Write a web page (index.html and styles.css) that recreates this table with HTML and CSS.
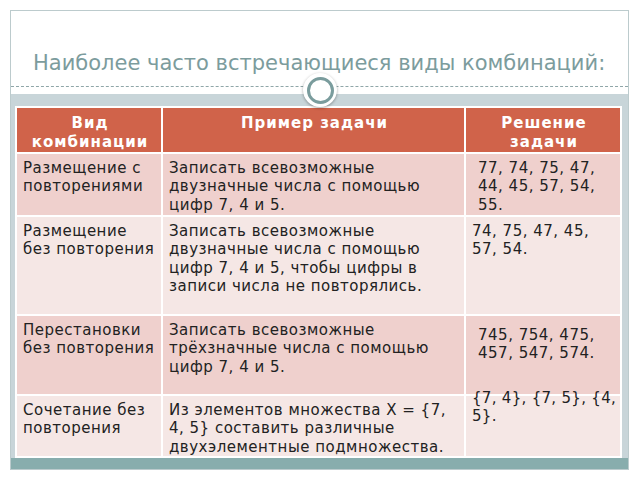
FILE: index.html
```html
<!DOCTYPE html>
<html lang="ru">
<head>
<meta charset="utf-8">
<link rel="stylesheet" href="styles.css">
</head>
<body>
<div class="slide">
  <div class="head">
    <h1 class="title">Наиболее часто встречающиеся виды комбинаций:</h1>
  </div>
  <div class="knob"><div class="knob-ring"></div></div>
  <div class="body">
    <table class="grid">
      <colgroup><col class="c1"><col class="c2"><col class="c3"></colgroup>
      <thead>
        <tr class="hrow">
          <th>Вид<br>комбинации</th>
          <th>Пример задачи</th>
          <th>Решение<br>задачи</th>
        </tr>
      </thead>
      <tbody>
        <tr class="r1 odd">
          <td>Размещение с повторениями</td>
          <td>Записать всевозможные двузначные числа с помощью цифр 7, 4 и 5.</td>
          <td class="ans ind">77, 74, 75, 47, 44, 45, 57, 54, 55.</td>
        </tr>
        <tr class="r2 even">
          <td>Размещение без повторения</td>
          <td>Записать всевозможные двузначные числа с помощью цифр 7, 4 и 5, чтобы цифры в записи числа не повторялись.</td>
          <td class="ans">74, 75, 47, 45, 57, 54.</td>
        </tr>
        <tr class="r3 odd">
          <td>Перестановки без повторения</td>
          <td>Записать всевозможные трёхзначные числа с помощью цифр 7, 4 и 5.</td>
          <td class="ans ind low">745, 754, 475, 457, 547, 574.</td>
        </tr>
        <tr class="r4 even">
          <td>Сочетание без повторения</td>
          <td>Из элементов множества Х = {7, 4, 5} составить различные двухэлементные подмножества.</td>
          <td class="ans last"><div class="up">{7, 4}, {7, 5}, {4, 5}.</div></td>
        </tr>
      </tbody>
    </table>
  </div>
  <div class="foot"></div>
</div>
</body>
</html>
```
FILE: styles.css
```css
html, body {
  margin: 0;
  padding: 0;
  background: #ffffff;
}
.slide {
  position: relative;
  margin: 10px 0 0 10px;
  width: 619px;
  height: 460px;
  box-sizing: border-box;
  border: 1px solid #bccbcd;
  display: flex;
  flex-direction: column;
  background: #ffffff;
}
.head {
  height: 78px;
  border-bottom: 1px dashed #8fa6a8;
  margin-bottom: 7px;
  display: flex;
  align-items: flex-end;
}
.title {
  margin: 0 0 11px 22px;
  font-family: "DejaVu Sans", sans-serif;
  font-weight: normal;
  font-size: 21px;
  color: #7c9c9d;
  letter-spacing: 0;
  white-space: nowrap;
}
.knob {
  position: absolute;
  left: 292px;
  top: 62px;
  width: 34px;
  height: 34px;
  border-radius: 50%;
  background: #ffffff;
  box-shadow: 0 1px 3px rgba(0,0,0,0.35);
  display: flex;
  align-items: center;
  justify-content: center;
  z-index: 2;
}
.knob-ring {
  width: 21px;
  height: 21px;
  border-radius: 50%;
  border: 3.5px solid #7a9c9d;
}
.body {
  flex: 1;
  background: #c8d5d9;
  padding: 12px 7px 0 4px;
}
.grid {
  width: 605px;
  height: 347px;
  table-layout: fixed;
  border-collapse: collapse;
  font-family: "DejaVu Sans", sans-serif;
  font-size: 15px;
  letter-spacing: 0.5px;
  line-height: 18.5px;
  color: #222222;
}
.c1 { width: 146px; }
.c2 { width: 303px; }
.c3 { width: 156px; }
.grid th, .grid td {
  border: 2px solid #ffffff;
  vertical-align: top;
  text-align: left;
  padding: 5px 4px 0 6px;
}
.grid th {
  background: #d0634a;
  color: #ffffff;
  font-weight: bold;
  text-align: center;
  letter-spacing: 1px;
  padding-top: 6px;
  line-height: 19px;
}
.hrow { height: 43px; }
.r1 { height: 63px; }
.r2 { height: 99px; }
.r3 { height: 80px; }
.r4 { height: 62px; }
.odd td { background: #efd0cd; }
.even td { background: #f5e7e5; }
.ans.ind { padding-left: 12px; }
.ans.low { padding-top: 10px; }
.ans.last { padding-right: 0; }
.up {
  margin-top: -12px;
  margin-right: -6px;
  letter-spacing: 0.3px;
}
.foot {
  height: 11px;
  background: #88adad;
}
```
